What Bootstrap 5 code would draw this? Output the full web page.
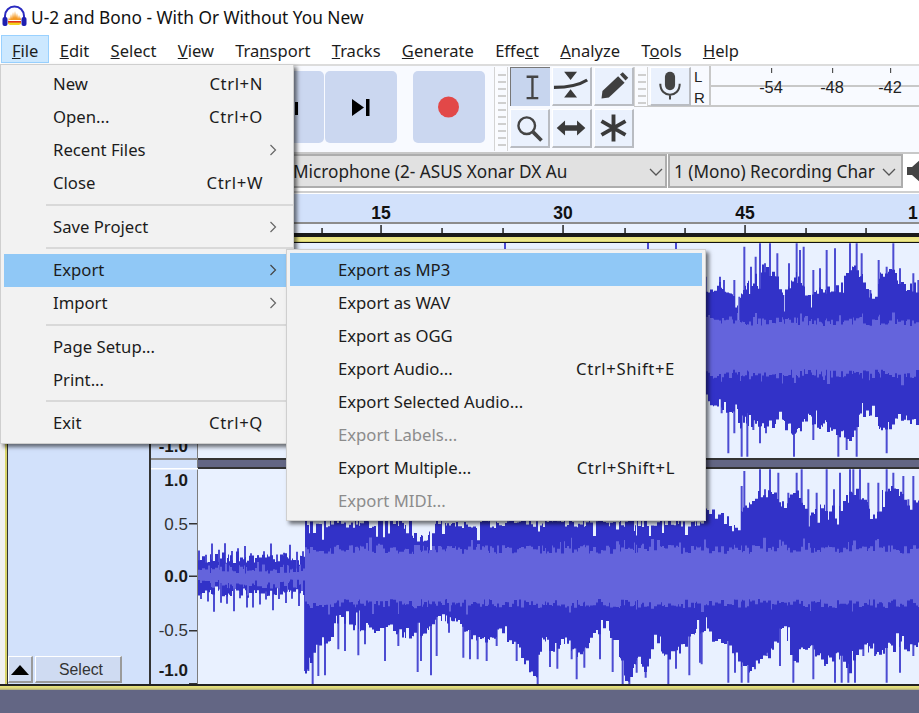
<!DOCTYPE html>
<html lang="en">
<head>
<meta charset="utf-8">
<title>Audacity</title>
<link href="https://cdn.jsdelivr.net/npm/bootstrap@5.3.0/dist/css/bootstrap.min.css" rel="stylesheet">
<style>
:root{--ui:"Noto Sans","Open Sans",sans-serif;--ink:#1c1c1c;--panel:#d2e1fb;--wave:#e9f1ff;--track:#636684}
html,body{height:713px;overflow:hidden;background:#fff}
body{font-family:var(--ui);font-size:16.7px;color:var(--ink);position:relative}
.tbar{height:35px;padding:4px 0 0 2px;gap:4px;font-size:17.3px;color:#111}
.wtitle{margin-top:1px;line-height:26px}
.mbar{height:29px;padding-left:1.300px;flex-wrap:nowrap}
.mbar .nav-link{color:var(--ink);padding:0 9.650px;height:28px;line-height:29px;border:1px solid transparent;font-size:16.55px}
.mbar .nav-link.active{background:#cce8ff;border-color:#99d1ff}
.toolrow{height:90px;background:#f8faff;border-top:2px solid #dcdcdc;border-bottom:2px solid #c8c8c8}
.transport{width:494px;flex:none;gap:1px;padding:5px 9px 0 0;justify-content:flex-end;height:100%}
.tbtn{width:72px;height:72px;background:#cbd7f0;border-radius:5px;flex:none}
.tbtn.rec{margin-left:15px}
.grip{width:14px;flex:none;margin-top:1px;background:repeating-linear-gradient(#f8faff 0 3px,#cfcfcf 3px 5px,#f8faff 5px 7px) 3px 4px/8px 100% no-repeat #fbfcff;border-left:1px solid #d4d4d4;border-right:1px solid #d4d4d4}
.grip.t{height:84px}
.tools{width:126px;flex:none;display:grid;grid-template-columns:repeat(3,40px);grid-auto-rows:39px;gap:3px 2px;padding:1px 0 0 2px}
.tool{background:#eaf1fd;border-right:2px solid #b9bcc2;border-bottom:2px solid #b9bcc2;border-top:1px solid #fff;border-left:1px solid #fff}
.tool.on{background:#c7d5ee;border:0;border-left:1px solid #777;border-top:1px solid #777}
.tool svg,.tbtn svg{display:block;width:100%;height:100%}
.meterhead{height:41px;border-bottom:2px solid #c8c8c8;position:relative}
.grip.s{height:39px;margin-top:1px}
.mic{width:41px;height:39px;flex:none;margin:1px 0 0 2px}
.lr{width:18px;flex:none;font:15px/21px "Liberation Sans",sans-serif;padding-left:3px;color:#222}
.meter{flex:1;border-left:2px solid #c8c8c8;position:relative}
.meter i{display:block;height:21px;border-bottom:2px solid #c8c8c8}
.mk{position:absolute;top:12px;font:16.400px/18px "Liberation Sans",sans-serif;color:#222;transform:translateX(-50%)}
.mk::before{content:"";position:absolute;left:50%;top:-10px;height:5px;border-left:1.500px solid #333}
.devrow{height:34px;background:#fff;padding-left:170px}
.devbox{background:#e1e1e1;border:2px solid #adadad;height:34px;position:relative;flex:none;display:flex;align-items:center;white-space:nowrap;color:#222;font-size:17.200px;padding-top:1px}
.devbox svg{position:absolute;top:12px}
.dev1{width:497px;padding-left:121px}
.dev2{width:235px;padding-left:4px;margin-left:1px}
.chv1{left:477px}
.chv2{left:212px}
.spk{flex:none}
.gap6{height:6px;background:linear-gradient(#fff 0 3px,#cfcfcf 3px 5px,#fff 5px)}
.ruler{display:block;height:43px}
.ybar{height:6px;background:linear-gradient(#e8e27c,#efe98c 60%,#c9c460 82%,#111 82%)}
.tracks{height:441px}
.edge{width:5px;flex:none;background:#f0f0f0}
.yb{width:2px;flex:none;background:#d8d46a}
.tpanel{width:144px;flex:none;background:var(--panel);border-right:2px solid #333;border-left:1px solid #333;padding:0 0 1px 0;gap:2px}
.pbtn{height:27px;background:#cfdbf2;border-top:1px solid #fff;border-left:1px solid #fff;border-right:2px solid #9a9a9a;border-bottom:2px solid #9a9a9a;display:flex;align-items:center;justify-content:center;font:15.800px "Liberation Sans",sans-serif;color:#333;padding:1px 0 0}
.pb1{width:25px}
.pb2{width:87px;padding-left:6px}
.vscale{width:47px;flex:none;display:block}
.wcol{flex:1;min-width:0}
.wcol svg{display:block}
.tdiv{height:11px;background:var(--track);border-top:2px solid #333;border-bottom:2px solid #333}
.wavebg{background:var(--wave)}
.botbar{height:6px;background:linear-gradient(#222 0 2px,#e8e27c 2px,#dcd77a 4px,#a9a77f)}
.botfill{height:23px;background:var(--track)}
.amenu{display:block;position:absolute;z-index:5;border-radius:0;border:1px solid #cfcfcf;background:#f2f2f2;padding:3px 0;min-width:0;font-size:16.700px;color:var(--ink);box-shadow:3px 3px 4px rgba(0,0,0,.55)}
.amenu .dropdown-item{height:33px;display:flex;align-items:center;justify-content:space-between;color:var(--ink);white-space:nowrap;background:none;padding:0 27px 0 49px;margin:0 3px;width:auto}
.amenu .dropdown-item.active{background:#90c8f6;color:var(--ink)}
.amenu .dropdown-item.disabled{color:#8c8c8c}
.amenu .dropdown-divider{height:2px;margin:4.250px 0 4.250px 45px;border:0;background:#d9d9d9;opacity:1}
.kbd{letter-spacing:.6px}
.file{left:0;top:64px;width:294px;padding:2.500px 0 3px}
.sub{left:286px;top:249px;width:420px;z-index:6}
.sub .dropdown-item{padding:1px 27px 0 48px}
.chev{margin-right:-14px;flex:none}
</style>
</head>
<body>
<header class="tbar d-flex align-items-start">
  <svg width="25" height="24" viewBox="0 0 25 24"><path d="M3 17V12a9.5 9.5 0 0 1 19 0v5" fill="none" stroke="#2a2ac0" stroke-width="2"/><rect x="0.5" y="13" width="5" height="9" rx="2" fill="#1f1fb0"/><rect x="19.5" y="13" width="5" height="9" rx="2" fill="#1f1fb0"/><path d="M6 18l1-5 1 3 1-6 1 5 1-7 1 6 1-7 1 7 1-5 1 6 1-4 1 4 1-2v3H6z" fill="#f59a23"/><path d="M6 18h13v2l-2 1H8l-2-1z" fill="#f3d21e"/><rect x="6" y="17" width="13" height="1.6" fill="#e0301e"/></svg>
  <span class="wtitle">U-2 and Bono - With Or Without You New</span>
</header>
<nav class="mbar nav">
  <a class="nav-link active" href="#"><u>F</u>ile</a>
  <a class="nav-link" href="#"><u>E</u>dit</a>
  <a class="nav-link" href="#"><u>S</u>elect</a>
  <a class="nav-link" href="#"><u>V</u>iew</a>
  <a class="nav-link" href="#">Tra<u>n</u>sport</a>
  <a class="nav-link" href="#"><u>T</u>racks</a>
  <a class="nav-link" href="#"><u>G</u>enerate</a>
  <a class="nav-link" href="#">Effe<u>c</u>t</a>
  <a class="nav-link" href="#"><u>A</u>nalyze</a>
  <a class="nav-link" href="#">T<u>o</u>ols</a>
  <a class="nav-link" href="#"><u>H</u>elp</a>
</nav>
<section class="toolrow d-flex">
  <div class="transport d-flex">
    <div class="tbtn"><svg viewBox="0 0 72 72"><rect x="43" y="31" width="3" height="13"/></svg></div>
    <div class="tbtn"><svg viewBox="0 0 72 72"><path d="M27 28l12 8.500-12 8.500z"/><rect x="41" y="28" width="3.500" height="17"/></svg></div>
    <div class="tbtn rec"><svg viewBox="0 0 72 72"><circle cx="35.500" cy="36" r="10.500" fill="#e24848"/></svg></div>
  </div>
  <div class="grip t"></div>
  <div class="tools">
    <div class="tool on"><svg viewBox="0 0 40 39"><path d="M22 9V31M16 9h12M16 31h12" fill="none" stroke="#444" stroke-width="2.400"/></svg></div>
    <div class="tool"><svg viewBox="0 0 40 39"><path d="M12 4h14l-7 9zM12 32h14l-7-9z" fill="#3a3a3a"/><path d="M1 21C14 21 26 20 37 13" fill="none" stroke="#3a3a3a" stroke-width="3.500"/></svg></div>
    <div class="tool"><svg viewBox="0 0 40 39"><path d="M7 33l1-8L25 9l7 7-17 16z" fill="#3f3f3f"/><path d="M27 7l3-2.500 6 6-3 3z" fill="#3f3f3f"/></svg></div>
    <div class="tool"><svg viewBox="0 0 40 39"><circle cx="17" cy="17" r="9" fill="none" stroke="#444" stroke-width="2.600"/><path d="M24 24l9 9" stroke="#444" stroke-width="4"/></svg></div>
    <div class="tool"><svg viewBox="0 0 40 39"><path d="M4 19.500l9-8v5h13v-5l9 8-9 8v-5H13v5z" fill="#3a3a3a"/></svg></div>
    <div class="tool"><svg viewBox="0 0 40 39"><path d="M20 5V34M7 12L33 27M33 12L7 27" stroke="#3a3a3a" stroke-width="4.200" fill="none"/></svg></div>
  </div>
  <div class="flex-grow-1 d-flex flex-column">
    <div class="meterhead d-flex">
      <div class="grip s"></div>
      <div class="mic tool"><svg viewBox="0 0 41 39"><rect x="15" y="4" width="11" height="20" rx="5.500" fill="#444"/><path d="M10 17c0 16 21 16 21 0M20.500 28V34" fill="none" stroke="#444" stroke-width="2.200"/></svg></div>
      <div class="lr">L<br>R</div>
      <div class="meter"><i></i><span class="mk" style="left:60px">-54</span><span class="mk" style="left:121px">-48</span><span class="mk" style="left:179px">-42</span></div>
    </div>
  </div>
</section>
<section class="devrow d-flex">
  <div class="devbox dev1">Microphone (2- ASUS Xonar DX Au<svg class="chv1" width="14" height="8" viewBox="0 0 14 8"><path d="M1 1l6 6 6-6" fill="none" stroke="#555" stroke-width="1.300"/></svg></div>
  <div class="devbox dev2"><span>1 (Mono) Recording Char</span><svg class="chv2" width="14" height="8" viewBox="0 0 14 8"><path d="M1 1l6 6 6-6" fill="none" stroke="#555" stroke-width="1.300"/></svg></div>
  <svg class="ms-1 spk" width="14" height="34" viewBox="0 0 14 34"><path d="M0 13h5l9-8v24l-9-8H0z" fill="#444"/></svg>
</section>
<div class="gap6"></div>
<svg class="ruler" id="ruler" width="919" height="43"></svg>
<div class="ybar"></div>
<section class="tracks d-flex">
  <div class="edge"></div><div class="yb"></div>
  <div class="tpanel d-flex align-items-end">
    <button class="pbtn pb1"><svg width="18" height="10" viewBox="0 0 18 10"><path d="M9 0l9 10H0z" fill="#000"/></svg></button>
    <button class="pbtn pb2">Select</button>
  </div>
  <svg class="vscale" id="vscale" width="47" height="441"></svg>
  <div class="wcol d-flex flex-column">
    <svg class="wavebg" id="w1" width="721" height="215"></svg>
    <div class="tdiv"></div>
    <svg class="wavebg" id="w2" width="721" height="215"></svg>
  </div>
</section>
<div class="botbar"></div>
<div class="botfill"></div>

<div class="dropdown-menu show amenu file">
  <a class="dropdown-item" href="#"><span>New</span><span class="kbd">Ctrl+N</span></a>
  <a class="dropdown-item" href="#"><span>Open...</span><span class="kbd">Ctrl+O</span></a>
  <a class="dropdown-item" href="#"><span>Recent Files</span><svg class="chev" width="8" height="12" viewBox="0 0 8 12"><path d="M1.500 1l5 5-5 5" fill="none" stroke="#666" stroke-width="1.200"/></svg></a>
  <a class="dropdown-item" href="#"><span>Close</span><span class="kbd">Ctrl+W</span></a>
  <hr class="dropdown-divider">
  <a class="dropdown-item" href="#"><span>Save Project</span><svg class="chev" width="8" height="12" viewBox="0 0 8 12"><path d="M1.500 1l5 5-5 5" fill="none" stroke="#666" stroke-width="1.200"/></svg></a>
  <hr class="dropdown-divider">
  <a class="dropdown-item active" href="#"><span>Export</span><svg class="chev" width="8" height="12" viewBox="0 0 8 12"><path d="M1.500 1l5 5-5 5" fill="none" stroke="#444" stroke-width="1.200"/></svg></a>
  <a class="dropdown-item" href="#"><span>Import</span><svg class="chev" width="8" height="12" viewBox="0 0 8 12"><path d="M1.500 1l5 5-5 5" fill="none" stroke="#666" stroke-width="1.200"/></svg></a>
  <hr class="dropdown-divider">
  <a class="dropdown-item" href="#"><span>Page Setup...</span></a>
  <a class="dropdown-item" href="#"><span>Print...</span></a>
  <hr class="dropdown-divider">
  <a class="dropdown-item" href="#"><span>Exit</span><span class="kbd">Ctrl+Q</span></a>
</div>
<div class="dropdown-menu show amenu sub">
  <a class="dropdown-item active" href="#"><span>Export as MP3</span></a>
  <a class="dropdown-item" href="#"><span>Export as WAV</span></a>
  <a class="dropdown-item" href="#"><span>Export as OGG</span></a>
  <a class="dropdown-item" href="#"><span>Export Audio...</span><span class="kbd">Ctrl+Shift+E</span></a>
  <a class="dropdown-item" href="#"><span>Export Selected Audio...</span></a>
  <a class="dropdown-item disabled" href="#"><span>Export Labels...</span></a>
  <a class="dropdown-item" href="#"><span>Export Multiple...</span><span class="kbd">Ctrl+Shift+L</span></a>
  <a class="dropdown-item disabled" href="#"><span>Export MIDI...</span></a>
</div>

<script>
var NS='http://www.w3.org/2000/svg';
function el(p,n,a,t){var e=document.createElementNS(NS,n);for(var k in a)e.setAttribute(k,a[k]);if(t)e.textContent=t;p.appendChild(e);return e}
var seed=7;function R(){seed=(seed*16807)%2147483647;return seed/2147483647}
var ru=document.getElementById('ruler');
el(ru,'rect',{x:0,y:0,width:919,height:28,fill:'#d2e1fb'});
el(ru,'rect',{x:0,y:28,width:919,height:2,fill:'#8c8c8c'});
el(ru,'rect',{x:0,y:30,width:919,height:9,fill:'#e9f1ff'});
el(ru,'rect',{x:0,y:39,width:919,height:4,fill:'#1a1a1a'});
[[381,'15'],[563,'30'],[745,'45']].forEach(function(m){
  el(ru,'text',{x:m[0],y:25,'text-anchor':'middle','font-family':'Liberation Sans','font-weight':'bold','font-size':17.500,fill:'#111'},m[1]);
  el(ru,'rect',{x:m[0]-.7,y:31,width:1.500,height:8,fill:'#222'});
});
el(ru,'text',{x:908,y:25,'font-family':'Liberation Sans','font-weight':'bold','font-size':17.500,fill:'#111'},'1');
[322,442,503,625,685,806,866].forEach(function(x){el(ru,'rect',{x:x-.7,y:34,width:1.500,height:5,fill:'#222'})});
var vs=document.getElementById('vscale');
el(vs,'rect',{x:0,y:0,width:47,height:441,fill:'#d2e1fb'});
el(vs,'rect',{x:46,y:0,width:1,height:441,fill:'#7c7c7c'});
el(vs,'rect',{x:0,y:215,width:47,height:2,fill:'#8c8c8c'});
el(vs,'rect',{x:0,y:225,width:47,height:1.500,fill:'#fff'});
[['-1.0',209,1],['1.0',243,1],['0.5',287,0],['0.0',339,1],['-0.5',393,0],['-1.0',433,1]].forEach(function(l){
  el(vs,'text',{x:37,y:l[1],'text-anchor':'end','font-family':'Liberation Sans','font-weight':l[2]?'bold':'normal','font-size':17,fill:l[2]?'#1a1a1a':'#333'},l[0]);
});
[280,332.500,387,440].forEach(function(y){el(vs,'rect',{x:38,y:y,width:8,height:1.500,fill:'#333'})});
function K(a,ox,oy){return a.map(function(p){return [ox+p[0]/3,oy+p[1]/3]})}
function I(k,x){if(x<=k[0][0])return k[0][1];for(var i=1;i<k.length;i++){if(x<=k[i][0]){var a=k[i-1],b=k[i];return a[1]+(b[1]-a[1])*(x-a[0])/(b[0]-a[0])}}return k[k.length-1][1]}
function draw(id,oy,c,rms,top,bot,st,x0,minY,maxY,amp){
  var s=document.getElementById(id),d1='',d2='',d3='',ox=198;
  st.forEach(function(p){d1+='M'+(p[0]-ox)+' '+(c-oy)+'V'+(p[1]-oy)});
  function clamp(v){return Math.max(minY,Math.min(maxY,v))}
  for(var x=x0;x<919;){
    var w=1+Math.floor(R()*3);
    var t=I(top,x)+(R()-.5)*amp,b=I(bot,x)+(R()-.5)*amp;
    if(R()<.16)t+=R()*amp*1.6;
    if(R()<.16)b-=R()*amp*1.6;
    var h=rms(x),rt=c-h+(R()-.5)*9-(R()<.16?R()*9:0),rb=c+h+(R()-.5)*9+(R()<.16?R()*9:0);
    d2+='M'+(x-ox)+' '+(clamp(t)-oy).toFixed(1)+'h'+w+'V'+(clamp(b)-oy).toFixed(1)+'h-'+w+'z';
    d3+='M'+(x-ox)+' '+(rt-oy).toFixed(1)+'h'+w+'V'+(rb-oy).toFixed(1)+'h-'+w+'z';
    x+=w;
  }
  el(s,'path',{d:d1,stroke:'#4c4cd2','stroke-width':2,fill:'none'});
  el(s,'path',{d:d2,fill:'#3232c8'});
  el(s,'path',{d:d3,fill:'#6464dc'});
}
var t1=K([[195,180],[240,170],[270,195],[295,240],[310,170],[340,150],[370,110],[400,130],[430,190],[470,120],[500,195],[540,180],[580,180],[630,110],[660,130],[700,220],[720,130],[760,130],[800,180],[837,160]],640,230);
var b1=K([[195,500],[240,540],[265,540],[300,590],[340,580],[380,600],[420,570],[460,620],[500,560],[540,590],[580,600],[630,640],[660,560],[700,540],[720,600],[760,580],[800,570],[837,590]],640,230);
var s1=K([[197,140],[222,190],[240,140],[252,150],[268,190],[283,150],[291,245],[298,200],[313,50],[333,110],[347,80],[360,40],[375,100],[390,40],[412,70],[430,195],[438,190],[447,100],[470,40],[480,60],[491,50],[520,120],[540,115],[560,60],[585,55],[601,200],[630,40],[650,40],[665,70],[691,180],[706,225],[716,90],[740,110],[760,40],[780,115],[805,190],[820,130],[835,150],
 [210,510],[228,500],[245,550],[265,670],[283,610],[305,680],[322,680],[340,600],[360,640],[378,610],[400,520],[437,505],[462,680],[497,510],[520,630],[540,530],[580,560],[595,680],[620,660],[650,680],[674,520],[706,500],[740,670],[760,545],[800,530],[820,560]],640,230);
s1=s1.concat([[505,243],[648,243],[676,243]]);
draw('w1',243,347.500,function(){return 26},[[198,290]].concat(t1),[[198,410]].concat(b1),s1,198,243,458,10);
var qt=[],qb=[],spk=[];
for(var x=198;x<304;x+=5){qt.push([x,557+R()*6-3]);qb.push([x,592+R()*6-3])}
for(x=199;x<304;x+=6.500){spk.push([Math.round(x),541+R()*14]);spk.push([Math.round(x+2),597+R()*14])}
var top2=qt.concat([[304,557],[305,522],[411,522],[412,532],[425,542],[431,530],[438,522],[700,522]],K([[45,170],[100,180],[140,230],[160,150],[200,120],[240,110],[280,150],[320,100],[350,170],[400,150],[440,170],[480,100],[530,130],[555,200],[580,100],[620,100],[660,150],[687,140]],690,455));
var bz9=K([[32,460],[60,390],[110,370],[115,310],[180,330],[250,340],[300,340],[340,360],[380,370],[420,300],[480,320],[530,360],[580,370],[630,340]],295,515);
var bz10=K([[0,320],[10,370],[40,380],[60,410],[90,460],[110,500],[125,350],[150,400],[200,370],[230,420],[260,390],[300,340],[350,400],[380,500],[410,420],[440,470],[460,360],[500,430],[560,380],[590,340],[630,350]],500,515);
var bz7=K([[60,560],[110,560],[150,630],[180,640],[210,600],[240,590],[280,510],[310,620],[350,560],[400,620],[440,600],[480,640],[520,570],[560,590],[620,570],[687,580]],690,455);
var bot2=qb.concat([[304,592],[305,668]],bz9,bz10,bz7);
var s2=spk.concat(K([[30,465],[40,465],[53,505],[70,480],[90,478],[130,400],[150,405],[190,418],[210,385],[270,435],[310,390],[368,468],[378,435],[408,478],[425,420],[462,350],[505,425],[525,430],[548,430],[575,435],[605,390]],295,515),
 K([[50,435],[75,420],[100,465],[113,505],[150,453],[172,458],[215,430],[230,490],[253,455],[300,430],[338,468],[368,505],[388,505],[410,470],[437,485],[505,505],[528,458],[568,478],[605,445]],500,515),
 K([[30,620],[115,680],[135,650],[155,680],[175,680],[195,640],[230,600],[270,630],[310,680],[370,670],[405,630],[435,680],[455,680],[475,680],[495,680],[520,600],[555,600],[590,680],[630,650],[670,600]],690,455),
 K([[163,45],[155,90],[210,40],[225,100],[240,40],[265,50],[280,160],[295,110],[320,50],[335,40],[355,100],[380,110],[410,40],[432,100],[450,50],[480,40],[490,40],[510,40],[535,80],[550,190],[565,80],[590,40],[610,50],[640,60],[655,130],[670,60]],690,455));
draw('w2',468,575.500,function(x){return x<305?7.500:27},top2,bot2,s2,198,468,683,10);
</script>
</body>
</html>
